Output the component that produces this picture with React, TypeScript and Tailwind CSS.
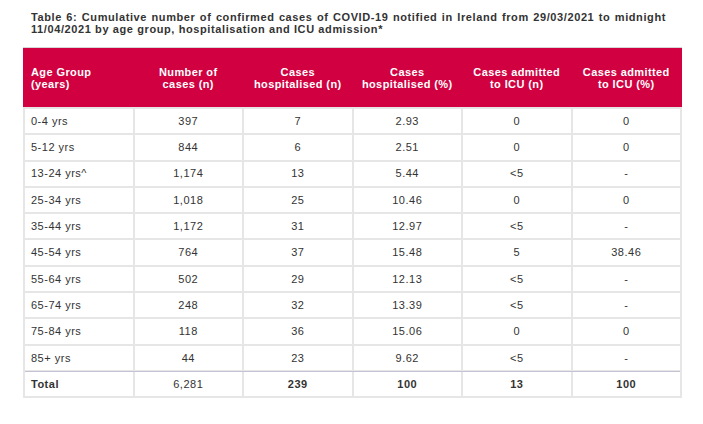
import React from "react";

const rows: string[][] = [
  ["0-4 yrs", "397", "7", "2.93", "0", "0"],
  ["5-12 yrs", "844", "6", "2.51", "0", "0"],
  ["13-24 yrs^", "1,174", "13", "5.44", "<5", "-"],
  ["25-34 yrs", "1,018", "25", "10.46", "0", "0"],
  ["35-44 yrs", "1,172", "31", "12.97", "<5", "-"],
  ["45-54 yrs", "764", "37", "15.48", "5", "38.46"],
  ["55-64 yrs", "502", "29", "12.13", "<5", "-"],
  ["65-74 yrs", "248", "32", "13.39", "<5", "-"],
  ["75-84 yrs", "118", "36", "15.06", "0", "0"],
  ["85+ yrs", "44", "23", "9.62", "<5", "-"],
];

const headers: [string, string][] = [
  ["Age Group", "(years)"],
  ["Number of", "cases (n)"],
  ["Cases", "hospitalised (n)"],
  ["Cases", "hospitalised (%)"],
  ["Cases admitted", "to ICU (n)"],
  ["Cases admitted", "to ICU (%)"],
];

export default function App() {
  return (
    <div
      className="w-[703px] h-[424px] bg-white text-[#333333] text-[11px] tracking-[0.5px]"
      style={{ fontFamily: '"Liberation Sans", Arial, sans-serif' }}
    >
      <div className="pt-[11px] pl-[31px] w-[666px] font-bold leading-[12px] text-justify tracking-[0.6px]">
        Table 6: Cumulative number of confirmed cases of COVID-19 notified in Ireland from 29/03/2021 to midnight 11/04/2021 by age group, hospitalisation and ICU admission*
      </div>
      <div className="ml-[23px] mt-[12px] w-[659px]">
        <div className="h-[60px] bg-[#d10040] border-t border-[#d6d6d6] grid grid-cols-6 gap-x-[2px] px-[2px] items-center text-white font-bold leading-[12px] tracking-[0.4px]">
          {headers.map((h, i) => (
            <div key={i} className={i === 0 ? "pl-[6px] text-left" : "text-center"}>
              <div>{h[0]}</div>
              <div>{h[1]}</div>
            </div>
          ))}
        </div>
        <div className="bg-[#e6e6e6] px-[2px] pt-[2px] pb-[2px] flex flex-col gap-y-[2px]">
          {rows.map((r, ri) => (
            <div key={ri} className="grid grid-cols-6 gap-x-[2px] h-[24.3px]">
              {r.map((c, ci) => (
                <div
                  key={ci}
                  className={
                    "bg-white flex items-center " +
                    (ci === 0 ? "pl-[6px]" : "justify-center")
                  }
                >
                  {c}
                </div>
              ))}
            </div>
          ))}
          <div className="grid grid-cols-6 gap-x-[2px] h-[25px] -mt-[1px] border-t border-[#c6c2d6]">
            {["Total", "6,281", "239", "100", "13", "100"].map((c, ci) => (
              <div
                key={ci}
                className={
                  "bg-white flex items-center " +
                  (ci === 0 ? "pl-[6px] " : "justify-center ") +
                  (ci === 1 ? "font-normal" : "font-bold")
                }
              >
                {c}
              </div>
            ))}
          </div>
        </div>
      </div>
    </div>
  );
}
